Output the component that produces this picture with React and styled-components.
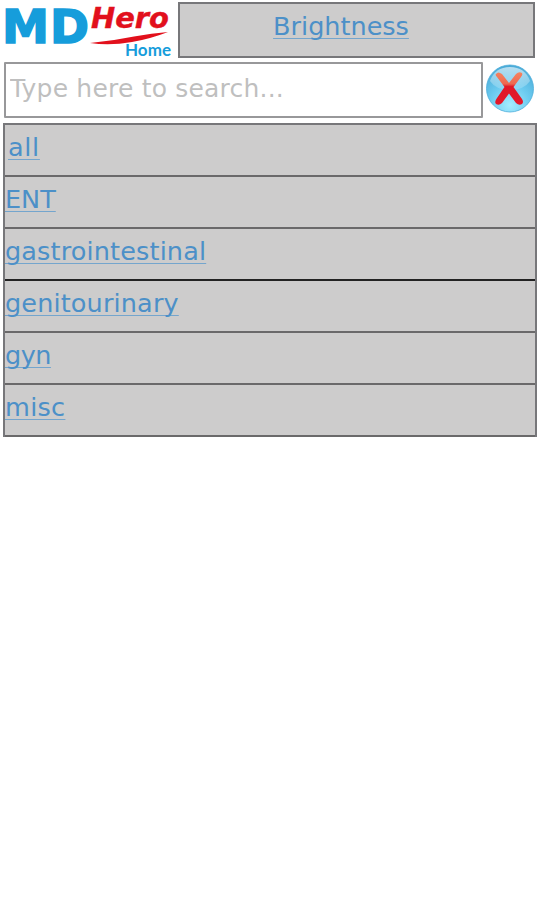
import React from "react";
import styled, { createGlobalStyle } from "styled-components";

const GlobalStyle = createGlobalStyle`
  * {
    box-sizing: border-box;
  }
  body {
    margin: 0;
    background: #ffffff;
    font-family: "DejaVu Sans", sans-serif;
  }
`;

const Page = styled.div`
  width: 540px;
  height: 900px;
  background: #ffffff;
`;

const Header = styled.header`
  display: flex;
  height: 62px;
  padding-top: 2px;
`;

const HomeLink = styled.a`
  display: block;
  width: 178px;
  height: 58px;

  svg {
    display: block;
    overflow: visible;
  }
`;

const Title = styled.div`
  width: 357px;
  height: 56px;
  padding: 6px 31px 0 0;
  background: #cdcccc;
  border: 2px solid #77777a;
  text-align: center;
  line-height: 36px;
`;

const Link = styled.a`
  display: inline-block;
  height: 32px;
  font-size: 25.5px;
  line-height: 32px;
  letter-spacing: ${(props) => props.$spacing || 0}px;
  color: #4c90c8;
  cursor: pointer;
  text-decoration: underline;
  text-decoration-color: #74a5cd;
  text-decoration-thickness: 1px;
  text-decoration-skip-ink: none;
  text-underline-offset: 3px;
`;

const SearchBar = styled.div`
  display: flex;
  height: 62px;
  padding-left: 4px;
`;

const SearchInput = styled.input`
  width: 479px;
  height: 56px;
  padding: 0 4px 4px;
  border: 2px solid #98989a;
  border-radius: 1px;
  outline: none;
  background: #ffffff;
  font-family: "DejaVu Sans", sans-serif;
  font-size: 25px;
  letter-spacing: 0.2px;
  &::placeholder {
    color: #bfbfbf;
    opacity: 1;
  }
`;

const ClearButton = styled.button`
  width: 50px;
  height: 52px;
  margin-left: 2px;
  padding: 0;
  border: 0;
  background: none;
`;

const List = styled.ul`
  width: 534px;
  margin: -1px 0 0 3px;
  padding: 0;
  list-style: none;
  background: #cdcccc;
  border: 2px solid #77777a;
  border-bottom: 0;
`;

const Item = styled.li`
  height: 52px;
  padding: 6px 0 0 ${(props) => props.$indent || 0}px;
  border-bottom: 2px solid ${(props) => (props.$thick ? "#222222" : "#6a696a")};
`;

const categories = [
  { name: "all", indent: 3, spacing: 0.7 },
  { name: "ENT" },
  { name: "gastrointestinal", spacing: 0.15, thick: true },
  { name: "genitourinary", spacing: 0.15 },
  { name: "gyn", spacing: -0.5 },
  { name: "misc", spacing: 0.3 },
];

function Logo() {
  return (
    <svg width="178" height="58" viewBox="0 2 178 58">
      <g fontFamily="DejaVu Sans" fontWeight="bold">
        <g fill="#169ddb" stroke="#169ddb" strokeWidth="1.6">
          <text x="2" y="42.5" fontSize="47" textLength="47" lengthAdjust="spacingAndGlyphs">M</text>
          <text x="50" y="42.5" fontSize="47" textLength="39" lengthAdjust="spacingAndGlyphs">D</text>
        </g>
        <text x="91" y="28" fontSize="28.5" fontStyle="italic" fill="#e2101c" stroke="#e2101c" strokeWidth="0.4" textLength="78" lengthAdjust="spacingAndGlyphs">Hero</text>
      </g>
      <path d="M90 43 Q112 41 134 36.5 Q152 33 168 32 Q150 39 132 42 Q110 46 90 43Z" fill="#e2101c" />
      <text x="125" y="56" fontFamily="Lato" fontWeight="bold" fontSize="17.5" fill="#169ddb" textLength="46" lengthAdjust="spacingAndGlyphs">Home</text>
    </svg>
  );
}

function ClearIcon() {
  return (
    <svg width="50" height="52" viewBox="0 0 50 52">
      <defs>
        <radialGradient id="ball" cx="50%" cy="85%" r="85%">
          <stop offset="0" stopColor="#a5ecff" />
          <stop offset="0.5" stopColor="#6ccbf0" />
          <stop offset="1" stopColor="#48a9d6" />
        </radialGradient>
        <linearGradient id="shine" x1="0" y1="0" x2="0" y2="1">
          <stop offset="0" stopColor="#ffffff" stopOpacity="0.6" />
          <stop offset="1" stopColor="#ffffff" stopOpacity="0.15" />
        </linearGradient>
        <linearGradient id="cross" x1="0" y1="0" x2="0" y2="1">
          <stop offset="0" stopColor="#f5835f" />
          <stop offset="0.36" stopColor="#ee6851" />
          <stop offset="0.44" stopColor="#df1828" />
          <stop offset="1" stopColor="#e4182b" />
        </linearGradient>
      </defs>
      <circle cx="25" cy="26.5" r="23.5" fill="url(#ball)" stroke="#4caddb" strokeWidth="0.8" />
      <path d="M5 19 Q10 5 25 5 Q40 5 45 19 Q39 28 25 28 Q11 28 5 19Z" fill="url(#shine)" />
      <path
        d="M11 12 Q13 9 17 12 L24 21 L31 12 Q34 9 37 11 Q38 13 36 15 L28.5 25 L37 37 Q39 40 37 42 Q34 44 31 41 L24 31.5 L17 41 Q14 44 11 42 Q9 40 12 36 L19.5 25 L12 15 Q10 13 11 12Z"
        fill="url(#cross)"
      />
    </svg>
  );
}

function App() {
  return (
    <>
      <GlobalStyle />
      <Page>
        <Header>
          <HomeLink>
            <Logo />
          </HomeLink>
          <Title>
            <Link>Brightness</Link>
          </Title>
        </Header>
        <SearchBar>
          <SearchInput placeholder="Type here to search..." />
          <ClearButton>
            <ClearIcon />
          </ClearButton>
        </SearchBar>
        <List>
          {categories.map((item) => (
            <Item key={item.name} $indent={item.indent} $thick={item.thick}>
              <Link $spacing={item.spacing}>{item.name}</Link>
            </Item>
          ))}
        </List>
      </Page>
    </>
  );
}

export default App;
